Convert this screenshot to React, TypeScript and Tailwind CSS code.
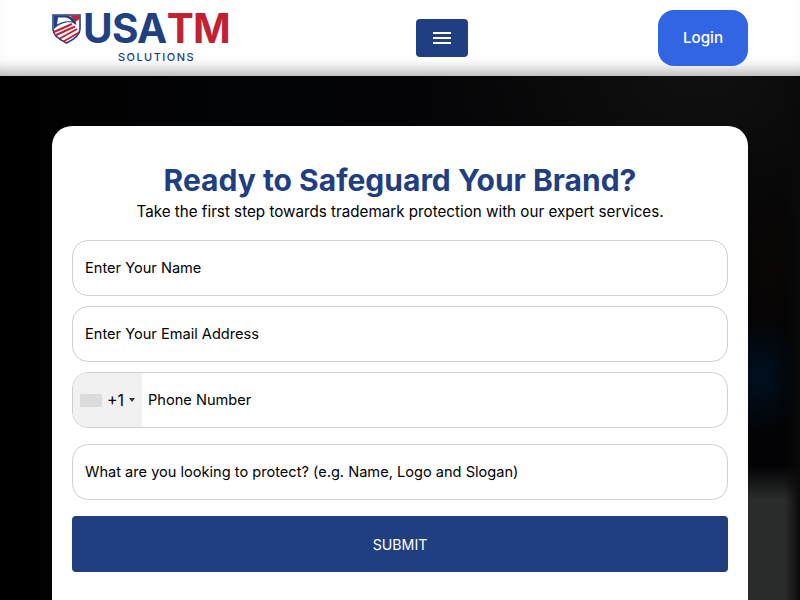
const font = { fontFamily: 'Inter, "Liberation Sans", sans-serif' };

function Logo() {
  return (
    <div className="flex items-start">
      <svg width="29" height="30" viewBox="0 0 29 30" className="mt-[14px] mr-[4px] shrink-0">
        <path d="M1 1H28V15C28 22 21 26 14.5 29C8 26 1 22 1 15Z" fill="#fff" stroke="#21407f" strokeWidth="1.6" />
        <path d="M2 1.5H15C20 2.5 24 6 24.5 11L20 8.5C14 7.5 7 10 2 15V2Z" fill="#21407f" />
        <path d="M6 3.5H14C17 4.5 19 6 20 7.5C14 6.5 9 8 5 10.5Z" fill="#fff" />
        <path d="M17 1.5H27.5V5L23.5 8C22.5 5.5 20 3 17 1.5Z" fill="#c22033" />
        <path d="M2 18L20 10M3 21.5L23 12.5M7 25L25 15M11.5 27.5L27 18.5" stroke="#c22033" strokeWidth="2" />
      </svg>
      <div className="flex flex-col items-center w-[143px]">
        <div className="flex text-[40.5px] font-bold leading-[40px] mt-[9px] tracking-[-0.7px] whitespace-nowrap">
          <span className="block text-[#21407f]">USA</span>
          <span className="block text-[#c22033]">TM</span>
        </div>
        <div className="text-[11px] font-medium leading-[12px] tracking-[1.45px] text-[#21407f] mt-[2px]">SOLUTIONS</div>
      </div>
    </div>
  );
}

function Field({ placeholder }: { placeholder: string }) {
  return (
    <div className="h-14 rounded-[16px] border border-[#cfcfcf] bg-white px-3 pt-[2px] flex items-center text-[14.6px] text-black">
      {placeholder}
    </div>
  );
}

export default function App() {
  return (
    <div className="w-[800px] h-[600px] overflow-hidden flex flex-col bg-black" style={font}>
      {/* Header */}
      <header className="h-[76px] shrink-0 bg-white px-[52px] flex items-start justify-between shadow-[inset_0_-16px_16px_-12px_rgba(0,0,0,0.35)]">
        <Logo />
        <button className="mt-[19px] mr-[2px] w-[52px] h-[38px] rounded-[4px] bg-[#213f80] flex flex-col items-center justify-center gap-[3px]">
          <span className="w-[18px] h-[2px] bg-white" />
          <span className="w-[18px] h-[2px] bg-white" />
          <span className="w-[18px] h-[2px] bg-white" />
        </button>
        <button className="mt-[10px] w-[90px] h-14 rounded-[16px] bg-[#3165e3] text-white text-[15.2px] font-medium">Login</button>
      </header>

      {/* Hero */}
      <main className="flex-1 px-[52px] pt-[50px] bg-[linear-gradient(to_right,transparent_785px,#0a0a0a_800px),radial-gradient(ellipse_230px_110px_at_765px_500px,#2a2b2b_70%,transparent_100%),radial-gradient(ellipse_40px_60px_at_760px_300px,#001020_0%,transparent_100%),radial-gradient(ellipse_40px_90px_at_770px_190px,#0b0605_0%,transparent_100%),radial-gradient(ellipse_300px_200px_at_700px_0px,#101010_0%,transparent_100%),linear-gradient(to_right,#000000_0%,#030406_30%,#030305_100%)]">
        <div className="bg-white rounded-t-[20px] px-5 pt-[34px] h-[500px]">
          <h1 className="text-center text-[30px] leading-[40px] font-bold text-[#213f80]">Ready to Safeguard Your Brand?</h1>
          <p className="text-center text-[15.2px] leading-[24px] text-black pt-px -mt-px mb-4">
            Take the first step towards trademark protection with our expert services.
          </p>
          <div className="flex flex-col gap-[10px]">
            <Field placeholder="Enter Your Name" />
            <Field placeholder="Enter Your Email Address" />
            <div className="h-14 rounded-[16px] border border-[#cfcfcf] bg-white flex items-center text-[14.6px] text-black overflow-hidden">
              <div className="h-full w-[69px] bg-[#f1f1f1] flex items-center pl-[7px]">
                <span className="w-[22px] h-[13px] bg-[#dbdbdb] rounded-[1px]" />
                <span className="ml-[5px] text-[16px]">+1</span>
                <span className="ml-[5px] border-x-[3px] border-x-transparent border-t-[4px] border-t-[#333]" />
              </div>
              <span className="ml-[6px] pt-[2px]">Phone Number</span>
            </div>
          </div>
          <div className="mt-4">
            <Field placeholder="What are you looking to protect? (e.g. Name, Logo and Slogan)" />
          </div>
          <button className="mt-4 w-full h-14 rounded-[4px] bg-[#213f80] text-white text-[14.2px] pt-[2px]">SUBMIT</button>
        </div>
      </main>
    </div>
  );
}
